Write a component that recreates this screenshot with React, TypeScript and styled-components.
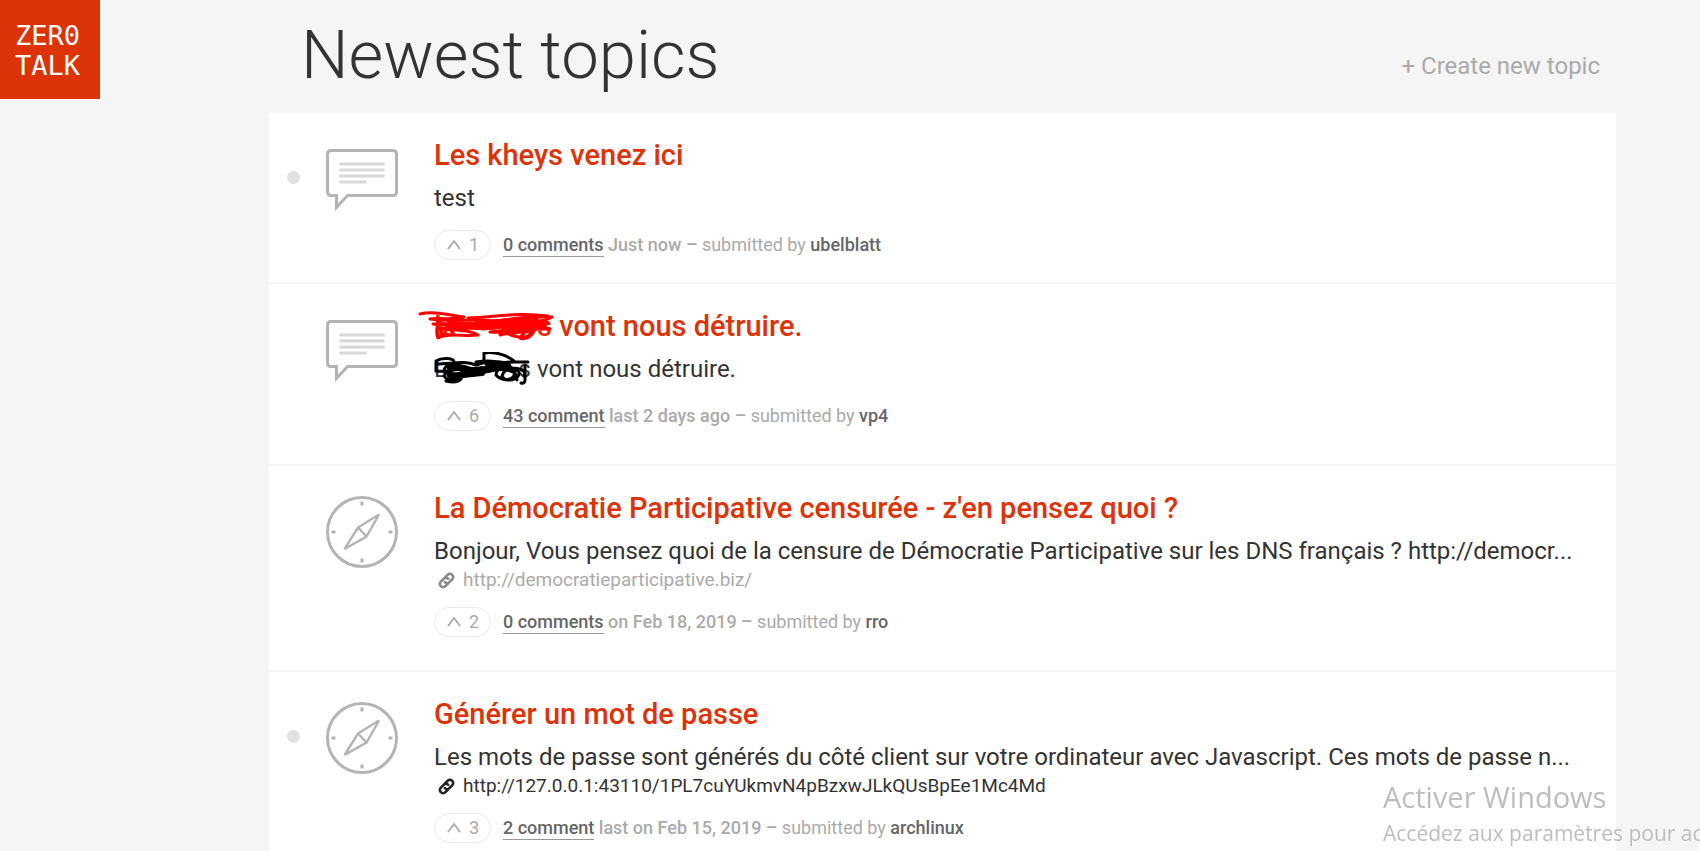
import React from "react";
import styled, { createGlobalStyle } from "styled-components";

const GlobalStyle = createGlobalStyle`
  * { box-sizing: border-box; }
  html, body { margin: 0; height: 100%; overflow: hidden; }
  body {
    background: #f5f5f5;
    color: #333;
    font-family: Roboto, "Liberation Sans", sans-serif;
  }
`;

const Page = styled.div`
  display: grid;
  grid-template-columns: 100px 1fr;
  column-gap: 169px;
  align-items: start;
  padding-right: 84px;
`;

const Logo = styled.a`
  display: block;
  height: 99px;
  padding: 21px 0 0 15px;
  background: #dd3308;
  color: #fff;
  font: 27px/30px "DejaVu Sans Mono", monospace;
  text-decoration: none;
`;

const Header = styled.header`
  display: flex;
  justify-content: space-between;
  align-items: flex-start;
  height: 113px;
  padding: 14px 16px 0 32px;
`;

const Heading = styled.h1`
  margin: 0;
  font-size: 67px;
  line-height: 82px;
  font-weight: 300;
`;

const CreateLink = styled.a`
  margin-top: 38px;
  color: #aaa;
  font-size: 24px;
  line-height: 28px;
  text-decoration: none;
`;

const TopicList = styled.ul`
  margin: 0;
  padding: 0;
  list-style: none;
  background: #fff;
`;

const Topic = styled.li<{ $compact?: boolean }>`
  display: grid;
  grid-template-columns: 13px 72px minmax(0, 1fr);
  column-gap: 26px;
  align-items: start;
  padding: 24px 40px ${(p) => (p.$compact ? 22 : 33)}px 18px;
  border-bottom: 2px solid #f4f4f4;
`;

const Dot = styled.span<{ $on?: boolean }>`
  width: 13px;
  height: 13px;
  margin-top: 34px;
  border-radius: 50%;
  background: ${(p) => (p.$on ? "#e1e1e1" : "transparent")};
`;

const TopicIcon = styled.svg`
  width: 72px;
  height: 72px;
  margin-top: 6px;
  fill: none;
  stroke: #b4b4b4;
  stroke-width: 3;
`;

const Content = styled.div`
  padding-left: 10px;
`;

const Title = styled.h2`
  margin: 0;
  font-size: 29px;
  line-height: 36px;
  font-weight: 500;
  a { color: #dd3308; text-decoration: none; }
`;

const Excerpt = styled.p`
  margin: 8px 0 0;
  font-size: 24px;
  line-height: 34px;
  white-space: nowrap;
`;

const SiteLink = styled.a<{ $muted?: boolean }>`
  display: flex;
  align-items: center;
  gap: 8px;
  padding-left: 4px;
  color: ${(p) => (p.$muted ? "#aaa" : "#333")};
  font-size: 19px;
  line-height: 24px;
  text-decoration: none;
  svg { flex: none; stroke: ${(p) => (p.$muted ? "#888" : "#222")}; }
`;

const Meta = styled.div`
  display: flex;
  align-items: center;
  gap: 12px;
  margin-top: 15px;
  color: #aaa;
  font-size: 18px;
  line-height: 22px;
`;

const VoteButton = styled.button`
  display: flex;
  justify-content: space-between;
  align-items: flex-start;
  width: 57px;
  height: 30px;
  padding: 3px 11px 0 12px;
  overflow: hidden;
  border: 1px solid #eaeaea;
  border-radius: 15px;
  background: #fff;
  color: #aaa;
  font: 18px/21px Roboto, sans-serif;
  svg { margin-top: 5px; }
`;

const Counter = styled.span`
  display: flex;
  flex-direction: column;
`;

const CommentsLink = styled.a`
  padding-bottom: 1px;
  border-bottom: 1px solid #999;
  color: #666;
  font-weight: 500;
  text-decoration: none;
`;

const When = styled.span`
  font-weight: 500;
`;

const Author = styled.a`
  color: #666;
  font-weight: 500;
  text-decoration: none;
`;

const Redacted = styled.span<{ $wide?: boolean }>`
  position: relative;
  display: inline-flex;
  justify-content: space-between;
  width: ${(p) => (p.$wide ? 118 : 97)}px;
`;

const Scribble = styled.svg`
  position: absolute;
  top: 0;
  left: -16px;
  fill: none;
  stroke-linecap: round;
  stroke-linejoin: round;
  stroke-width: 3;
`;

const Watermark = styled.aside`
  position: fixed;
  right: 0;
  bottom: 0;
  width: 317px;
  overflow: hidden;
  color: #bdbdbd;
  font-family: "Open Sans", "Noto Sans", sans-serif;
  white-space: nowrap;
  pointer-events: none;
`;

const WatermarkTitle = styled.div`
  font-size: 29px;
  line-height: 36px;
`;

const WatermarkText = styled.div`
  font-size: 21px;
  line-height: 36px;
`;

function SpeechIcon() {
  return (
    <TopicIcon viewBox="0 0 72 72" aria-hidden="true">
      <path d="M5 7.500H67Q70.500 7.500 70.500 11V49Q70.500 52.500 67 52.500H21.500L10.500 64.500V52.500H5Q1.500 52.500 1.500 49V11Q1.500 7.500 5 7.500Z" />
      <path stroke="#d8d8d8" d="M13.500 21H58.500M13.500 27H58.500M13.500 33H58.500M13.500 39H40.500" />
    </TopicIcon>
  );
}

function CompassIcon() {
  return (
    <TopicIcon viewBox="0 0 72 72" aria-hidden="true">
      <circle cx="36" cy="36" r="34.500" />
      <path d="M36 5.500V9.500M36 62.500V66.500M5.500 36H9.500M62.500 36H66.500" />
      <path strokeWidth="2.400" d="M53 18.500L32 31.500L18.500 53L40.500 40.500ZM32 31.500L40.500 40.500" />
    </TopicIcon>
  );
}

function ChainIcon() {
  return (
    <svg width="17" height="17" viewBox="0 0 17 17" fill="none" strokeWidth="2.600" strokeLinecap="round" aria-hidden="true">
      <path d="M7.200 5.200L9.600 2.800A3.200 3.200 0 0 1 14.200 7.400L11.400 10.200A3.200 3.200 0 0 1 6.800 10.200" />
      <path d="M9.800 11.800L7.400 14.200A3.200 3.200 0 0 1 2.800 9.600L5.600 6.800A3.200 3.200 0 0 1 10.200 6.800" />
    </svg>
  );
}

function RedScribble() {
  return (
    <Scribble width="140" height="36" viewBox="0 0 140 36" stroke="#f00" aria-hidden="true">
      <path d="M2 6C14 3 26 6 46 9C32 13 18 9 12 11C28 14 60 11 78 13C96 11 112 7 134 9C122 16 96 15 78 17C52 14 34 15 15 16C36 19 60 16 82 19C66 23 42 18 22 21C44 23 52 22 60 27C46 29 30 24 20 30C17 24 20 18 20 11C26 18 19 22 26 28C28 22 28 16 32 13C34 20 32 25 36 26" />
      <path d="M50 10C78 9 98 4 130 8C112 11 84 12 58 14C86 16 110 12 126 13C112 18 86 18 66 21C88 17 110 18 130 15C120 22 94 20 72 24C88 26 106 20 122 19C112 25 94 24 82 27C94 22 108 22 114 25C106 33 92 27 88 25C100 18 118 15 132 21C116 21 108 20 102 30C110 33 116 26 118 18" />
      <path strokeWidth="5" d="M64 20C80 14 98 20 118 13C108 20 92 18 84 23C94 25 104 23 112 19" />
    </Scribble>
  );
}

function BlackScribble() {
  return (
    <Scribble width="120" height="36" viewBox="0 0 120 36" stroke="#000" aria-hidden="true">
      <path d="M18 19V9C24 5 36 6 36 10M18 12C34 12 46 8 58 13C70 8 76 12 92 10L110 10M66 9V1C78-1 90 4 96 9M18 19C30 21 40 14 52 20C62 24 76 15 88 18C98 14 110 18 106 24" />
      <path d="M26 20C26 10 42 9 45 18C47 28 30 31 26 24C30 14 52 17 62 21C52 26 36 22 28 29C44 33 48 23 42 15C34 12 30 25 35 27C52 19 64 23 74 18C62 14 46 16 40 23M58 10C76 7 94 11 96 20C98 29 84 30 78 23C78 15 92 12 101 20C103 27 88 32 84 24C88 13 98 16 99 28" />
      <path strokeWidth="6" d="M32 16C46 12 52 20 62 20C76 13 78 9 90 13C80 14 72 20 64 17M70 12C78 18 86 14 94 18M32 23C44 24 54 22 64 21" />
      <path d="M107 13V28Q107 32 103 31" />
    </Scribble>
  );
}

type TopicData = {
  unread?: boolean;
  compact?: boolean;
  icon: "speech" | "compass";
  title: React.ReactNode;
  excerpt: React.ReactNode;
  url?: string;
  visited?: boolean;
  votes: number;
  comments: string;
  when: string;
  author: string;
};

const topics: TopicData[] = [
  {
    unread: true,
    compact: true,
    icon: "speech",
    title: "Les kheys venez ici",
    excerpt: "test",
    votes: 1,
    comments: "0 comments",
    when: "Just now",
    author: "ubelblatt",
  },
  {
    icon: "speech",
    title: <><Redacted $wide><span>L</span><span>s</span><RedScribble /></Redacted> vont nous détruire.</>,
    excerpt: <><Redacted><span>L</span><span>s</span><BlackScribble /></Redacted> vont nous détruire.</>,
    votes: 6,
    comments: "43 comment",
    when: "last 2 days ago",
    author: "vp4",
  },
  {
    icon: "compass",
    title: "La Démocratie Participative censurée - z'en pensez quoi ?",
    excerpt: "Bonjour, Vous pensez quoi de la censure de Démocratie Participative sur les DNS français ? http://democr...",
    url: "http://democratieparticipative.biz/",
    visited: true,
    votes: 2,
    comments: "0 comments",
    when: "on Feb 18, 2019",
    author: "rro",
  },
  {
    unread: true,
    icon: "compass",
    title: "Générer un mot de passe",
    excerpt: "Les mots de passe sont générés du côté client sur votre ordinateur avec Javascript. Ces mots de passe n...",
    url: "http://127.0.0.1:43110/1PL7cuYUkmvN4pBzxwJLkQUsBpEe1Mc4Md",
    votes: 3,
    comments: "2 comment",
    when: "last on Feb 15, 2019",
    author: "archlinux",
  },
];

function TopicRow({ topic }: { topic: TopicData }) {
  return (
    <Topic $compact={topic.compact}>
      <Dot $on={topic.unread} />
      {topic.icon === "speech" ? <SpeechIcon /> : <CompassIcon />}
      <Content>
        <Title><a href="#topic">{topic.title}</a></Title>
        <Excerpt>{topic.excerpt}</Excerpt>
        {topic.url && (
          <SiteLink href={topic.url} $muted={topic.visited}>
            <ChainIcon />
            {topic.url}
          </SiteLink>
        )}
        <Meta>
          <VoteButton type="button" aria-label={`Vote up, ${topic.votes}`}>
            <svg width="14" height="11" viewBox="0 0 14 11" fill="none" stroke="#aaa" strokeWidth="1.800" aria-hidden="true">
              <path d="M1 10L7 2L13 10" />
            </svg>
            <Counter>
              <span>{topic.votes}</span>
              <span aria-hidden="true">{topic.votes + 1}</span>
            </Counter>
          </VoteButton>
          <span>
            <CommentsLink href="#comments">{topic.comments}</CommentsLink>{" "}
            <When>{topic.when} –</When> submitted by <Author href="#user">{topic.author}</Author>
          </span>
        </Meta>
      </Content>
    </Topic>
  );
}

export default function App() {
  return (
    <>
      <GlobalStyle />
      <Page>
        <Logo href="#home">ZER0<br />TALK</Logo>
        <main>
          <Header>
            <Heading>Newest topics</Heading>
            <CreateLink href="#new">+ Create new topic</CreateLink>
          </Header>
          <TopicList>
            {topics.map((topic) => (
              <TopicRow key={topic.author} topic={topic} />
            ))}
          </TopicList>
        </main>
      </Page>
      <Watermark>
        <WatermarkTitle>Activer Windows</WatermarkTitle>
        <WatermarkText>Accédez aux paramètres pour act</WatermarkText>
      </Watermark>
    </>
  );
}
